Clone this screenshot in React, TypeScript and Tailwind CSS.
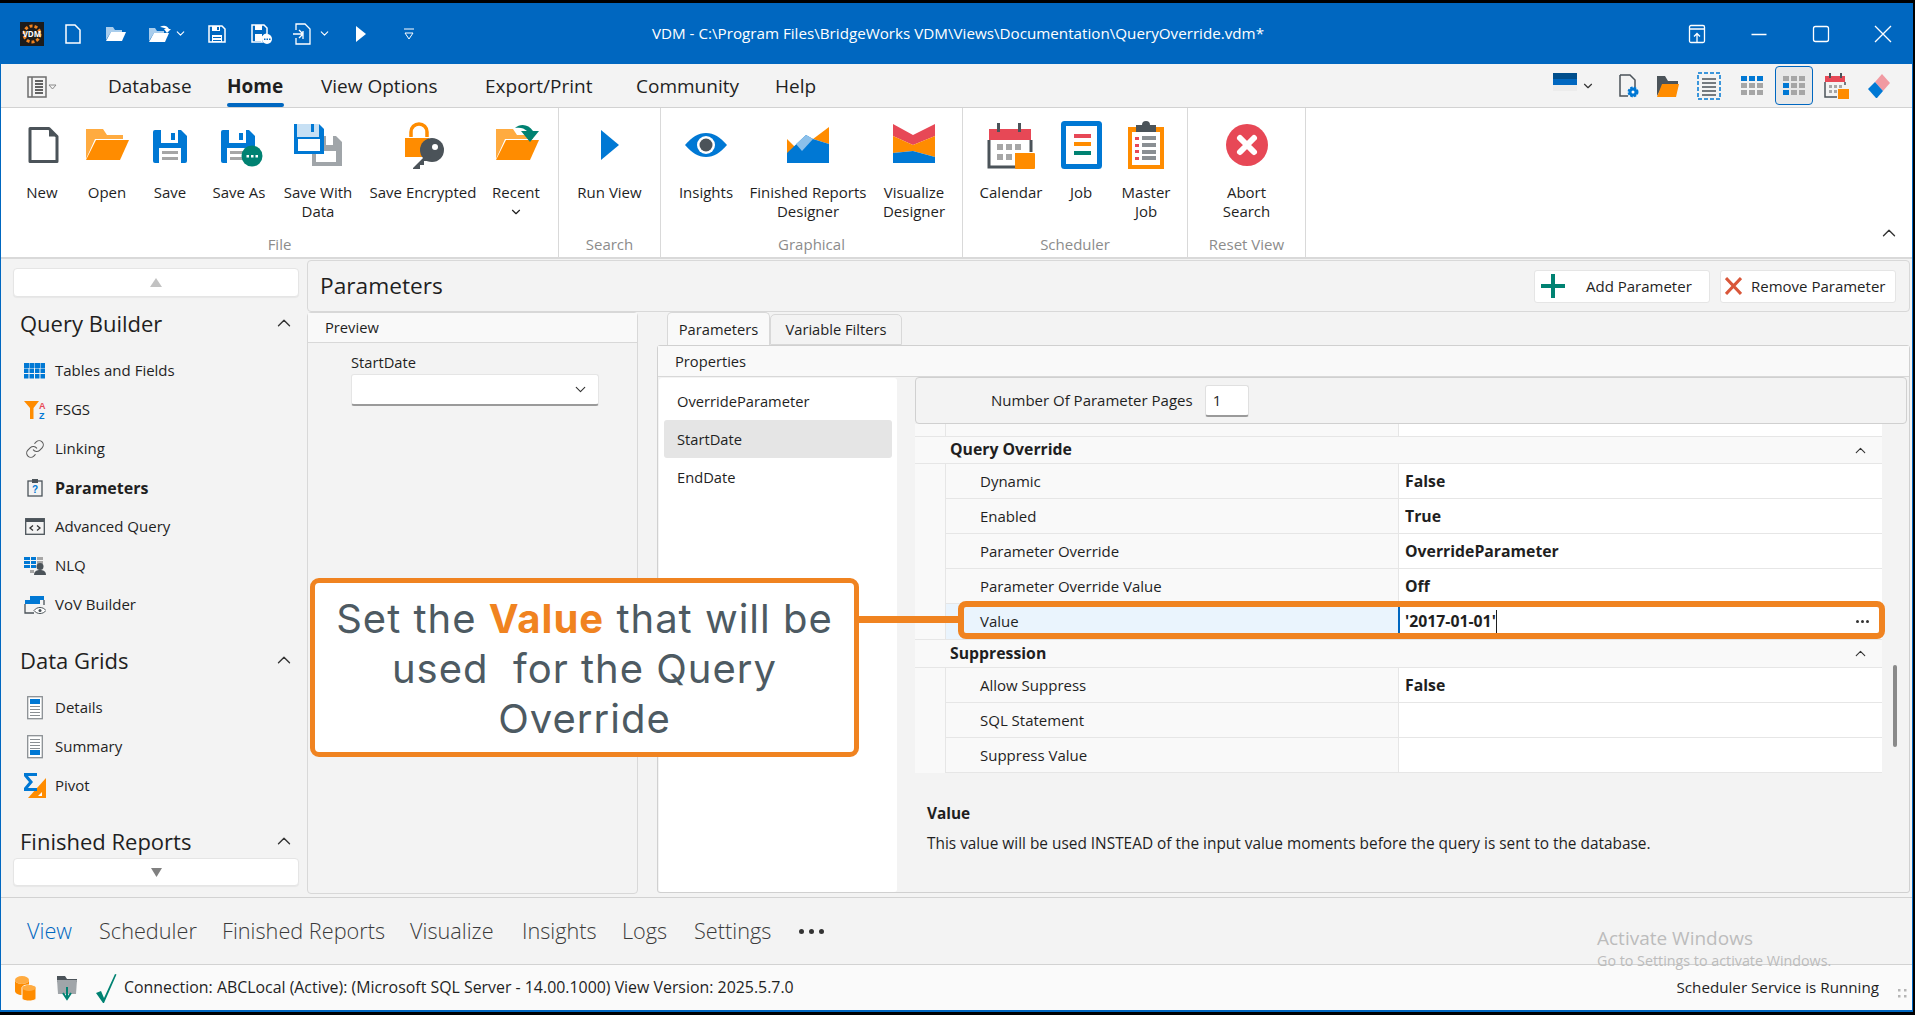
import { ChevronDown, ChevronUp, Link as LinkIcon } from "lucide-react";
import type { ReactNode } from "react";

const BLUE = "#0078d4";
const ORANGE = "#ff8c00";
const GREY = "#4b5359";
const TEAL = "#008272";
const RED = "#e74856";

// ── ribbon icons (48 box) ───────────────────────────────────────
function Box({ children, s = 48 }: { children: ReactNode; s?: number }) {
  return (
    <svg width={s} height={s} viewBox={`0 0 ${s} ${s}`} className="shrink-0">
      {children}
    </svg>
  );
}

const NewIcon = () => (
  <Box>
    <path d="M12 7.500h19l8 8v25H12z" fill="#fff" stroke={GREY} strokeWidth="3" strokeLinejoin="round" />
    <path d="M31 7v8.500h8z" fill={GREY} />
  </Box>
);

const Folder = ({ dx = 0 }: { dx?: number }) => (
  <g transform={`translate(${dx} 0)`}>
    <path d="M3 8h17l4 6h16v4H12L3 38z" fill="#ffab40" />
    <path d="M3 39l10-20h33l-9 20z" fill={ORANGE} />
  </g>
);

const Floppy = ({ x = 7, y = 9 }: { x?: number; y?: number }) => (
  <g transform={`translate(${x} ${y})`}>
    <path d="M0 2a2 2 0 0 1 2-2h26l6 6v25a2 2 0 0 1-2 2H2a2 2 0 0 1-2-2z" fill={BLUE} />
    <path d="M8 0h17v13H8z" fill="#fff" />
    <path d="M18 3h4v7h-4z" fill={BLUE} />
    <path d="M6 18h22v15H6z" fill="#fff" />
    <path d="M9 21h16v3H9zM9 27h16v3H9z" fill="#a6a6a6" />
  </g>
);

const SaveAsIcon = () => (
  <Box>
    <Floppy x={6} y={9} />
    <circle cx="37" cy="35" r="10.500" fill={TEAL} />
    <path d="M31.500 34h2.500v2.500h-2.500zM36 34h2.500v2.500H36zM40.500 34h2.500v2.500h-2.500z" fill="#fff" />
  </Box>
);

const SaveDataIcon = () => (
  <Box>
    <path d="M18 15h24l6 6v24H18z" fill="#a0a5a9" />
    <path d="M22 30h20v11H22z" fill="#fff" />
    <path d="M32 15h7v9h-7z" fill="#fff" />
    <path d="M0 3h25l5 5v25H0z" fill={BLUE} />
    <path d="M3 3h22v13H3z" fill="#c7e0f4" />
    <path d="M17 3h3v8h-3z" fill={BLUE} />
    <path d="M4 18h22v12H4z" fill="#fff" />
  </Box>
);

const EncryptedIcon = () => (
  <Box>
    <path d="M12 16v-5a8 8 0 0 1 16 0v5" fill="none" stroke={ORANGE} strokeWidth="3.500" />
    <path d="M6 17h24v19H6z" fill={ORANGE} />
    <circle cx="33" cy="29" r="12" fill={GREY} />
    <circle cx="36" cy="26" r="3" fill="#fff" />
    <path d="M27 34l-13 13v1h7v-4h4v-4h3l4-4z" fill={GREY} />
  </Box>
);

const RecentIcon = () => (
  <Box>
    <Folder dx={1} />
    <path d="M23 7c5-5 14-4 18 3h6l-9 11-9-11h6c-3-3-7-4-12-3z" fill={TEAL} />
  </Box>
);

const InsightsIcon = () => (
  <Box>
    <path d="M3 24C10 16 16 12 24 12s14 4 21 12c-7 8-13 12-21 12S10 32 3 24z" fill={BLUE} />
    <circle cx="24" cy="24" r="9" fill="#fff" />
    <circle cx="24" cy="24" r="6.500" fill={GREY} />
  </Box>
);

const FinishedIcon = () => (
  <Box>
    <path d="M3 18l8 8-8 8zM45 6v17L29 18z" fill={ORANGE} />
    <path d="M3 32l19-18 7 4 16 5v19H3z" fill={BLUE} />
    <path d="M18 30l-6-7 10-9 7 4z" fill="#8cc0ea" />
  </Box>
);

const VisualizeIcon = () => (
  <Box>
    <path d="M3 3l20 11L45 3v12L23 24 3 15z" fill={RED} />
    <path d="M3 15l20 9 22-9v21l-22-6-20 2z" fill={ORANGE} />
    <path d="M3 32l20-2 22 6v6H3z" fill={BLUE} />
  </Box>
);

const CalendarIcon = () => (
  <Box>
    <path d="M2 8h42v11H2z" fill={RED} />
    <path d="M10 2h3v9h-3zM31 2h3v9h-3z" fill={GREY} />
    <path d="M2 19v27h30" fill="#fff" stroke={GREY} strokeWidth="3" />
    <path d="M44 19v12" stroke={GREY} strokeWidth="3" />
    <path d="M10 23h6v6h-6zM19 23h6v6h-6zM28 23h6v6h-6zM10 33h6v6h-6zM19 33h6v6h-6z" fill="#a6a6a6" />
    <path d="M28 32h19a1 1 0 0 1 1 1v14a1 1 0 0 1-1 1H29a1 1 0 0 1-1-1z" fill={ORANGE} />
  </Box>
);

const JobIcon = () => (
  <Box>
    <rect x="6.500" y="2.500" width="36" height="43" rx="1" fill="#fff" stroke={BLUE} strokeWidth="5" />
    <path d="M17 13h17v4H17z" fill={RED} />
    <path d="M17 21h17v4H17z" fill={ORANGE} />
    <path d="M17 30h17v4H17z" fill={TEAL} />
  </Box>
);

const MasterJobIcon = () => (
  <Box>
    <path d="M6 6h36v42H6z" fill={ORANGE} />
    <path d="M10 11h28v33H10z" fill="#fff" />
    <path d="M14 6h6a4 4 0 0 1 8 0h6v7H14z" fill={GREY} transform="translate(0 -2)" />
    <path d="M13 16h4v3h-4zM13 23h4v3h-4zM13 29h4v3h-4zM13 36h4v3h-4z" fill={RED} />
    <path d="M20 15h14v4H20zM20 22h14v4H20zM20 29h14v4H20zM20 35h14v4H20z" fill="#8a8f93" />
  </Box>
);

const AbortIcon = () => (
  <Box>
    <ellipse cx="24" cy="24" rx="21" ry="21" fill={RED} />
    <path d="M17 17l14 14M31 17L17 31" stroke="#fff" strokeWidth="6" strokeLinecap="round" />
  </Box>
);

// ── ribbon ──────────────────────────────────────────────────────
function Tool({ icon, label, className, chevron }: { icon: ReactNode; label: ReactNode; className: string; chevron?: boolean }) {
  return (
    <div className={`flex flex-col items-center text-center ${className}`}>
      {icon}
      <div className="mt-[14px] whitespace-nowrap leading-[19px]">{label}</div>
      {chevron && <ChevronDown size={14} strokeWidth={2} className="mt-[3px]" />}
    </div>
  );
}

function Group({ label, className, children }: { label: string; className: string; children: ReactNode }) {
  return (
    <div className={`flex h-full flex-col border-r border-[#d9d9d9] ${className}`}>
      <div className="flex flex-1 pt-[13px]">{children}</div>
      <div className="pb-[3px] text-center leading-[19px] text-[#8c8c8c]">{label}</div>
    </div>
  );
}

function Ribbon() {
  return (
    <div className="relative flex h-[151px] shrink-0 border-b-2 border-[#d9d9d9] bg-white text-[15px] text-[#1f1f1f]">
      <Group label="File" className="w-[558px]">
        <div className="w-[9px]" />
        <Tool icon={<NewIcon />} label="New" className="w-[64px]" />
        <Tool icon={<Box><Folder /></Box>} label="Open" className="w-[66px]" />
        <Tool icon={<Box><Floppy /></Box>} label="Save" className="w-[60px]" />
        <Tool icon={<SaveAsIcon />} label="Save As" className="w-[78px]" />
        <Tool icon={<SaveDataIcon />} label={<>Save With<br />Data</>} className="w-[80px]" />
        <Tool icon={<EncryptedIcon />} label="Save Encrypted" className="w-[130px]" />
        <Tool icon={<RecentIcon />} label="Recent" className="w-[56px]" chevron />
      </Group>
      <Group label="Search" className="w-[102px]">
        <Tool
          icon={<Box><path d="M15 9l18 15-18 15z" fill={BLUE} /></Box>}
          label="Run View"
          className="w-[101px]"
        />
      </Group>
      <Group label="Graphical" className="w-[302px]">
        <div className="w-[11px]" />
        <Tool icon={<InsightsIcon />} label="Insights" className="w-[68px]" />
        <Tool icon={<FinishedIcon />} label={<>Finished Reports<br />Designer</>} className="w-[136px]" />
        <Tool icon={<VisualizeIcon />} label={<>Visualize<br />Designer</>} className="w-[76px]" />
      </Group>
      <Group label="Scheduler" className="w-[225px]">
        <div className="w-[10px]" />
        <Tool icon={<CalendarIcon />} label="Calendar" className="w-[76px]" />
        <Tool icon={<JobIcon />} label="Job" className="w-[64px]" />
        <Tool icon={<MasterJobIcon />} label={<>Master<br />Job</>} className="w-[66px]" />
      </Group>
      <Group label="Reset View" className="w-[118px]">
        <Tool icon={<AbortIcon />} label={<>Abort<br />Search</>} className="w-[117px]" />
      </Group>
      <div className="flex flex-1 items-end justify-end pb-[13px] pr-[12px]">
        <ChevronUp size={22} strokeWidth={1.5} className="text-[#333]" />
      </div>
    </div>
  );
}

// ── title bar ───────────────────────────────────────────────────
const qa = { fill: "#fff" };

function TitleBar() {
  return (
    <div className="flex h-[61px] shrink-0 items-center bg-[#0067c0] text-white">
      <div className="flex w-[600px] items-center pl-[19px]">
        <div className="relative flex h-[24px] w-[24px] items-center justify-center bg-[#1c1c1c]">
          <svg width="24" height="24" viewBox="0 0 24 24" className="absolute inset-0">
            <circle cx="12" cy="12" r="8" fill="none" stroke="#f08320" strokeWidth="3" strokeDasharray="3 2" />
          </svg>
          <span className="relative text-[8px] font-bold leading-none text-white">VDM</span>
        </div>
        <svg width="18" height="20" viewBox="0 0 18 20" className="ml-[20px]">
          <path d="M2 1h9l5 5v13H2z" fill="none" stroke="#fff" strokeWidth="1.500" />
        </svg>
        <svg width="22" height="18" viewBox="0 0 22 18" className="ml-[23px]">
          <path d="M1 2h7l2 3h7v2H6L1 15z" fill="#a9cdec" />
          <path d="M1 16l5-9h15l-4 9z" {...qa} />
        </svg>
        <svg width="24" height="20" viewBox="0 0 24 20" className="ml-[21px]">
          <path d="M1 4h6l2 3h7v2H6L1 17z" fill="#a9cdec" />
          <path d="M1 18l5-9h15l-4 9z" {...qa} />
          <path d="M12 3c3-2 7-2 9 2h2l-4 4-3-4h2c-1-1-4-2-6-2z" {...qa} />
        </svg>
        <ChevronDown size={13} strokeWidth={2} className="ml-[2px]" />
        <svg width="18" height="18" viewBox="0 0 18 18" className="ml-[21px]">
          <path d="M1 1h13l3 3v13H1z" fill="none" stroke="#fff" strokeWidth="1.500" />
          <path d="M4 1h8v5H4zM4 10h10v7H4z" {...qa} />
          <path d="M9 2h2v3H9zM5 12h8v1H5zM5 15h8v1H5z" fill="#0067c0" />
        </svg>
        <svg width="22" height="20" viewBox="0 0 22 20" className="ml-[25px]">
          <path d="M1 1h12l3 3v6a6 6 0 0 0-5 8H1z" fill="none" stroke="#fff" strokeWidth="1.500" />
          <path d="M4 1h7v5H4zM4 10h7v7H4z" {...qa} />
          <circle cx="16" cy="15" r="5" {...qa} />
          <path d="M13 14.500h1.500v1.500H13zM15.500 14.500H17v1.500h-1.500zM18 14.500h1.500v1.500H18z" fill="#0067c0" />
        </svg>
        <svg width="18" height="22" viewBox="0 0 18 22" className="ml-[20px]">
          <path d="M3 7V1h9l5 5v15H3v-6" fill="none" stroke="#fff" strokeWidth="1.300" />
          <path d="M0 11h9M6 7l4 4-4 4M10 8v8" fill="none" stroke="#fff" strokeWidth="1.300" />
        </svg>
        <ChevronDown size={13} strokeWidth={2} className="ml-[7px]" />
        <svg width="10" height="16" viewBox="0 0 10 16" className="ml-[25px]">
          <path d="M0 0l10 8-10 8z" {...qa} />
        </svg>
        <svg width="12" height="12" viewBox="0 0 12 12" className="ml-[37px]">
          <path d="M1 1h10M2 5h8l-4 6z" fill="none" stroke="#fff" strokeWidth="1" />
        </svg>
      </div>
      <div className="w-[714px] whitespace-nowrap text-center text-[15.200px]">
        VDM - C:\Program Files\BridgeWorks VDM\Views\Documentation\QueryOverride.vdm*
      </div>
      <div className="flex flex-1 items-center justify-end gap-[38px] pr-[17px]">
        <svg width="24" height="24" viewBox="0 0 24 24" fill="none" stroke="#fff" strokeWidth="1.300">
          <rect x="4.500" y="3.500" width="15" height="17" rx="1.500" />
          <path d="M4.500 7h15M12 20v-8M9 14.500l3-3 3 3" />
        </svg>
        <svg width="24" height="24" viewBox="0 0 24 24" fill="none" stroke="#fff" strokeWidth="1.500">
          <path d="M4.500 12.500h15" />
        </svg>
        <svg width="24" height="24" viewBox="0 0 24 24" fill="none" stroke="#fff" strokeWidth="1.300">
          <rect x="4.500" y="4.500" width="15" height="15" rx="2" />
        </svg>
        <svg width="24" height="24" viewBox="0 0 24 24" fill="none" stroke="#fff" strokeWidth="1.300">
          <path d="M4 4l16 16M20 4L4 20" />
        </svg>
      </div>
    </div>
  );
}

// ── menu bar ────────────────────────────────────────────────────
function MenuBar() {
  return (
    <div className="flex h-[44px] shrink-0 border-b border-[#d2d2d2] bg-[#f3f3f3] text-[19px] leading-[26px] text-[#1f1f1f]">
      <div className="flex w-[107px] items-start pl-[26px] pt-[12px]">
        <svg width="30" height="22" viewBox="0 0 30 22" fill="none">
          <rect x="1" y="1" width="18" height="20" stroke="#6d6d6d" strokeWidth="1.500" />
          <path d="M5 1v20" stroke="#6d6d6d" strokeWidth="1.500" />
          <path d="M8 5h8M8 8h8M8 11h8M8 14h8M8 17h8" stroke="#333" strokeWidth="1.300" />
          <path d="M22 9h7l-3.500 4z" stroke="#8a8a8a" />
        </svg>
      </div>
      <div className="w-[119px] pt-[9px]">Database</div>
      <div className="w-[94px] pt-[9px] font-bold">
        Home
        <div className="mt-[4px] h-[4px] w-[57px] rounded-full bg-[#0067c0]" />
      </div>
      <div className="w-[164px] pt-[9px]">View Options</div>
      <div className="w-[151px] pt-[9px]">Export/Print</div>
      <div className="w-[139px] pt-[9px]">Community</div>
      <div className="pt-[9px]">Help</div>
      <div className="ml-auto flex items-start pr-[21px] pt-[2px]">
        <div className="mt-[7px] flex items-start">
          <svg width="25" height="18" viewBox="0 0 25 18">
            <path d="M0 0h24v6H0z" fill="#004e8c" />
            <path d="M0 6h24v6H0z" fill="#0067c0" />
            <path d="M0 12h24v6H0z" fill="#ececec" />
          </svg>
          <ChevronDown size={14} strokeWidth={2} className="ml-[3px] mt-[6px] text-[#333]" />
        </div>
        <svg width="24" height="26" viewBox="0 0 24 26" className="ml-[21px] mt-[7px]">
          <path d="M4 2h10l5 5v7M4 2v21h8" fill="none" stroke={GREY} strokeWidth="1.500" />
          <circle cx="17" cy="19" r="4.500" fill={BLUE} />
          <circle cx="17" cy="19" r="4" fill="none" stroke={BLUE} strokeWidth="3" strokeDasharray="2 1.200" />
          <circle cx="17" cy="19" r="1.500" fill="#fff" />
        </svg>
        <svg width="24" height="24" viewBox="0 0 24 24" className="ml-[16px] mt-[8px]">
          <path d="M1 2h8l3 5h10v4H7L1 22z" fill={GREY} />
          <path d="M1 23l5-13h17l-3 13z" fill={ORANGE} />
        </svg>
        <svg width="24" height="28" viewBox="0 0 24 28" fill="none" className="ml-[17px] mt-[6px]">
          <rect x="1" y="1" width="22" height="26" stroke={BLUE} strokeWidth="1.500" strokeDasharray="4 2" />
          <path d="M5 7h14M5 11h14M5 15h14M5 19h14M5 23h14" stroke={GREY} strokeWidth="1.500" />
        </svg>
        <svg width="24" height="22" viewBox="0 0 24 22" className="ml-[19px] mt-[9px]">
          <path d="M1 1h6v5H1zM9 1h6v5H9zM17 1h6v5h-6z" fill={BLUE} />
          <path d="M1 8h6v5H1zM9 8h6v5H9zM17 8h6v5h-6zM1 15h6v5H1zM9 15h6v5H9zM17 15h6v5h-6z" fill="#a6a6a6" />
        </svg>
        <div className="ml-[11px] flex h-[39px] w-[38px] items-center justify-center rounded-[4px] border border-[#0067c0] bg-[#e8e8e8]">
          <svg width="24" height="22" viewBox="0 0 24 22">
            <path d="M1 1h6v5H1zM9 1h6v5H9zM17 1h6v5h-6zM9 8h6v5H9zM17 8h6v5h-6zM9 15h6v5H9zM17 15h6v5h-6z" fill="#a6a6a6" />
            <path d="M1 8h6v5H1zM1 15h6v5H1z" fill={BLUE} />
          </svg>
        </div>
        <svg width="26" height="28" viewBox="0 0 26 28" className="ml-[11px] mt-[6px]">
          <path d="M1 4h20v6H1z" fill={RED} />
          <path d="M5 1h2v5H5zM16 1h2v5h-2z" fill={GREY} />
          <path d="M1 10v15h12M21 10v3" fill="none" stroke={GREY} strokeWidth="1.500" />
          <path d="M5 13h3v3H5zM10 13h3v3h-3zM15 13h3v3h-3zM5 18h3v3H5zM10 18h3v3h-3z" fill="#a6a6a6" />
          <path d="M14 17h11v10H14z" fill={ORANGE} />
        </svg>
        <svg width="24" height="26" viewBox="0 0 24 26" className="ml-[17px] mt-[7px]">
          <path d="M15 1l8 9-7 8-8-9z" fill="#f19aa2" />
          <path d="M8 9l8 9-6 7-1 0-8-9z" fill={BLUE} />
        </svg>
      </div>
    </div>
  );
}

// ── sidebar ─────────────────────────────────────────────────────
const IconTables = () => (
  <svg width="21" height="16" viewBox="0 0 21 16" fill={BLUE}>
    <path d="M0 0h21v5H0z" />
    <path d="M0 5.500h4.500v4.500H0zM5.500 5.500H10v4.500H5.500zM11 5.500h4.500v4.500H11zM16.500 5.500H21v4.500h-4.500zM0 11h4.500v4.500H0zM5.500 11H10v4.500H5.500zM11 11h4.500v4.500H11zM16.500 11H21v4.500h-4.500z" />
    <path d="M5 0h.5v5H5zM10.500 0h.5v5h-.5zM16 0h.5v5H16z" fill="#f3f3f3" />
  </svg>
);
const IconFsgs = () => (
  <svg width="22" height="20" viewBox="0 0 22 20">
    <path d="M0 1h15l-5.500 7v11H6V8z" fill={ORANGE} />
    <text x="15" y="8.500" fontSize="9" fontWeight="700" fill={RED} fontFamily="'Liberation Sans',sans-serif">A</text>
    <text x="15" y="18.500" fontSize="9" fontWeight="700" fill={BLUE} fontFamily="'Liberation Sans',sans-serif">Z</text>
  </svg>
);
const IconParams = () => (
  <svg width="16" height="19" viewBox="0 0 16 19" fill="none">
    <rect x="1" y="3" width="14" height="15" stroke={GREY} strokeWidth="1.300" />
    <path d="M5 1h6v4H5z" fill={GREY} />
    <text x="8" y="15" textAnchor="middle" fontSize="10" fontWeight="700" fill={BLUE} fontFamily="'Liberation Sans',sans-serif">?</text>
  </svg>
);
const IconAdvanced = () => (
  <svg width="20" height="17" viewBox="0 0 20 17" fill="none">
    <rect x=".7" y=".7" width="18.600" height="15.600" stroke={GREY} strokeWidth="1.300" />
    <path d="M1 1h18v3H1z" fill={GREY} />
    <path d="M8 7.500L5 10l3 2.500M12 7.500l3 2.500-3 2.500" stroke="#333" strokeWidth="1.300" />
  </svg>
);
const IconNlq = () => (
  <svg width="22" height="19" viewBox="0 0 22 19">
    <path d="M0 1h6v3H0zM7 1h5v3H7zM0 5h6v3H0zM7 5h5v3H7zM0 9h6v3H0zM7 9h5v3H7z" fill={BLUE} />
    <path d="M13 1h6v3h-6zM13 5h6v3h-6zM6 14h4v3H6z" fill="#a6a6a6" />
    <circle cx="16" cy="10.500" r="3.500" fill={GREY} />
    <path d="M10 19c0-4 3-5 6-5s6 1 6 5z" fill={GREY} />
  </svg>
);
const IconVov = () => (
  <svg width="22" height="20" viewBox="0 0 22 20" fill="none">
    <path d="M6 1h14v4H6z" fill={BLUE} />
    <path d="M1 5h15v4H1z" fill={BLUE} />
    <path d="M1 9v9h9M20 5v5" stroke={GREY} strokeWidth="1.300" />
    <path d="M10 15.500c3-4 9-4 12 0-3 4-9 4-12 0z" fill="#fff" stroke={GREY} />
    <circle cx="16" cy="15.500" r="1.500" fill={GREY} />
  </svg>
);
const IconDetails = () => (
  <svg width="16" height="24" viewBox="0 0 16 24" fill="none">
    <rect x=".7" y=".7" width="14.600" height="22" fill="#fff" stroke="#8a8f93" strokeWidth="1.300" />
    <path d="M3 3h10v5H3z" fill={BLUE} />
    <path d="M3 10.500h10M3 13.500h10M3 16.500h10M3 19.500h10" stroke="#8a8f93" />
  </svg>
);
const IconSummary = () => (
  <svg width="16" height="24" viewBox="0 0 16 24" fill="none">
    <rect x=".7" y=".7" width="14.600" height="22" fill="#fff" stroke="#8a8f93" strokeWidth="1.300" />
    <path d="M3 4.500h10M3 7.500h10M3 10.500h10M3 13.500h10" stroke="#8a8f93" />
    <path d="M3 15h10v5H3z" fill={BLUE} />
  </svg>
);
const IconPivot = () => (
  <svg width="22" height="25" viewBox="0 0 22 25">
    <path d="M22 5v20H4z" fill={ORANGE} />
    <path d="M18 19v4h-4z" fill="#fff" />
    <path d="M0 0h13v3H4l5 6-5 6h9v3H0v-3l5-6-5-6z" fill={BLUE} />
  </svg>
);

function SideHead({ label }: { label: string }) {
  return (
    <div className="flex h-[32px] items-center justify-between pl-[19px] pr-[11px] text-[22px] text-[#1f1f1f]">
      <span>{label}</span>
      <ChevronUp size={22} strokeWidth={1.5} className="text-[#333]" />
    </div>
  );
}

function SideRow({ icon, label, bold }: { icon: ReactNode; label: string; bold?: boolean }) {
  return (
    <div className="flex h-[39px] items-center text-[#1f1f1f]">
      <div className="ml-[22px] flex w-[23px] justify-center">{icon}</div>
      <span className={`ml-[9px] ${bold ? "text-[16px] font-bold" : "text-[15px]"}`}>{label}</span>
    </div>
  );
}

function Sidebar() {
  return (
    <div className="flex w-[305px] shrink-0 flex-col pb-[11px] pt-[9px]">
      <div className="ml-[12px] mr-[7px] flex h-[29px] shrink-0 items-center justify-center rounded-[4px] border border-[#e5e5e5] bg-white shadow-[0_1px_1px_rgba(0,0,0,.05)]">
        <svg width="12" height="9" viewBox="0 0 12 9"><path d="M6 0l6 9H0z" fill="#c2c2c2" /></svg>
      </div>
      <div className="flex-1 overflow-hidden pt-[10px]">
        <SideHead label="Query Builder" />
        <div className="mt-[12px]">
          <SideRow icon={<IconTables />} label="Tables and Fields" />
          <SideRow icon={<IconFsgs />} label="FSGS" />
          <SideRow icon={<LinkIcon size={20} strokeWidth={1.3} className="text-[#5a5a5a]" />} label="Linking" />
          <SideRow icon={<IconParams />} label="Parameters" bold />
          <SideRow icon={<IconAdvanced />} label="Advanced Query" />
          <SideRow icon={<IconNlq />} label="NLQ" />
          <SideRow icon={<IconVov />} label="VoV Builder" />
        </div>
        <div className="mt-[20px]">
          <SideHead label="Data Grids" />
          <div className="mt-[12px]">
            <SideRow icon={<IconDetails />} label="Details" />
            <SideRow icon={<IconSummary />} label="Summary" />
            <SideRow icon={<IconPivot />} label="Pivot" />
          </div>
        </div>
        <div className="mt-[20px]">
          <SideHead label="Finished Reports" />
        </div>
      </div>
      <div className="ml-[12px] mr-[7px] flex h-[28px] shrink-0 items-center justify-center rounded-[4px] border border-[#e5e5e5] bg-white shadow-[0_1px_1px_rgba(0,0,0,.05)]">
        <svg width="11" height="9" viewBox="0 0 11 9"><path d="M0 0h11L5.500 9z" fill="#808080" /></svg>
      </div>
    </div>
  );
}

// ── property grid ───────────────────────────────────────────────
const ROW_LABEL = "flex w-[453px] items-center border-b border-l border-[#e6e6e6] bg-[#f9f9f9] pl-[34px] text-[15px]";
const ROW_VALUE = "flex w-[484px] items-center border-b border-l border-[#e6e6e6] bg-white pl-[6px] pt-[2px] text-[15.800px] font-bold";

function GridRow({ label, value }: { label: string; value?: string }) {
  return (
    <div className="flex h-[35px]">
      <div className="w-[30px] bg-[#f9f9f9]" />
      <div className={ROW_LABEL}>{label}</div>
      <div className={ROW_VALUE}>{value}</div>
    </div>
  );
}

function GridGroup({ label, className }: { label: string; className: string }) {
  return (
    <div className={`flex items-center justify-between border-y border-[#e6e6e6] bg-[#f9f9f9] pl-[35px] pr-[13px] text-[15.800px] font-bold ${className}`}>
      <span>{label}</span>
      <ChevronUp size={17} strokeWidth={1.6} className="text-[#333]" />
    </div>
  );
}

function Properties() {
  return (
    <div className="flex flex-1 flex-col text-[14.700px]">
      <div className="flex h-[33px] pl-[10px]">
        <div className="flex w-[103px] items-center justify-center rounded-t-[5px] border border-b-0 border-[#d8d8d8] bg-[#f9f9f9]">Parameters</div>
        <div className="mt-[2px] flex w-[132px] items-center justify-center rounded-t-[5px] border border-[#d8d8d8] bg-[#f3f3f3]">Variable Filters</div>
      </div>
      <div className="flex h-[548px] flex-col rounded-[3px] border border-[#d0d0d0]">
        <div className="flex h-[31px] shrink-0 items-center border-b border-[#d8d8d8] bg-[#f9f9f9] pl-[17px]">Properties</div>
        <div className="flex flex-1">
          <div className="ml-[1px] mt-[1px] w-[238px] rounded-[3px] bg-white px-[5px] pt-[4px]">
            <div className="flex h-[38px] items-center pl-[13px]">OverrideParameter</div>
            <div className="flex h-[38px] items-center rounded-[3px] bg-[#e5e5e5] pl-[13px]">StartDate</div>
            <div className="flex h-[38px] items-center pl-[13px]">EndDate</div>
          </div>
          <div className="ml-[18px] flex-1">
            <div className="mr-[2px] flex h-[47px] items-center rounded-[4px] border border-[#d0d0d0] bg-[#f3f3f3] pl-[75px] text-[15px]">
              <span>Number Of Parameter Pages</span>
              <div className="ml-[12px] flex h-[32px] w-[44px] items-center rounded-[3px] border border-b-2 border-[#e0e0e0] border-b-[#9a9a9a] bg-white pl-[7px]">1</div>
            </div>
            <div className="flex">
              <div className="w-[967px]">
                <div className="flex h-[12px]">
                  <div className="w-[30px] bg-[#f9f9f9]" />
                  <div className="w-[453px] border-l border-[#e6e6e6] bg-[#f9f9f9]" />
                  <div className="w-[484px] border-l border-[#e6e6e6] bg-white" />
                </div>
                <GridGroup label="Query Override" className="h-[28px]" />
                <GridRow label="Dynamic" value="False" />
                <GridRow label="Enabled" value="True" />
                <GridRow label="Parameter Override" value="OverrideParameter" />
                <GridRow label="Parameter Override Value" value="Off" />
                <div className="flex h-[35px]">
                  <div className="w-[30px] bg-[#f9f9f9]" />
                  <div className="flex w-[453px] items-center border-l border-[#e6e6e6] bg-[#eaf4fd] pl-[34px] text-[15px]">Value</div>
                  <div className="flex w-[484px] items-center justify-between border-l-2 border-[#0067c0] bg-white pl-[5px] pr-[13px] text-[15.800px] font-bold">
                    <span className="border-r border-[#1f1f1f]">'2017-01-01'</span>
                    <span className="flex gap-[2px]">
                      <i className="h-[3px] w-[3px] rounded-full bg-[#333]" />
                      <i className="h-[3px] w-[3px] rounded-full bg-[#333]" />
                      <i className="h-[3px] w-[3px] rounded-full bg-[#333]" />
                    </span>
                  </div>
                </div>
                <GridGroup label="Suppression" className="h-[29px]" />
                <GridRow label="Allow Suppress" value="False" />
                <GridRow label="SQL Statement" />
                <GridRow label="Suppress Value" />
              </div>
              <div className="ml-[11px] mt-[241px] h-[82px] w-[4px] rounded-full bg-[#8a8a8a]" />
            </div>
            <div className="pl-[12px] text-[15.400px]">
              <div className="mt-[31px] font-bold leading-[20px]">Value</div>
              <div className="mt-[10px] whitespace-nowrap leading-[20px]">This value will be used INSTEAD of the input value moments before the query is sent to the database.</div>
            </div>
          </div>
        </div>
      </div>
    </div>
  );
}

function Content() {
  return (
    <div className="flex flex-1 flex-col pb-[3px] pl-[1px] pr-[2px] pt-[1px] text-[#1f1f1f]">
      <div className="flex h-[52px] shrink-0 items-center justify-between rounded-[4px] border border-[#d8d8d8] pl-[12px] pr-[13px]">
        <span className="text-[22.700px]">Parameters</span>
        <div className="flex gap-[10px] text-[15px]">
          <div className="flex h-[33px] w-[176px] items-center rounded-[3px] border border-[#e5e5e5] bg-white pl-[6px]">
            <svg width="24" height="24" viewBox="0 0 24 24"><path d="M10 0h4v10h10v4H14v10h-4V14H0v-4h10z" fill={TEAL} /></svg>
            <span className="ml-[21px]">Add Parameter</span>
          </div>
          <div className="flex h-[33px] w-[176px] items-center rounded-[3px] border border-[#e5e5e5] bg-white pl-[4px]">
            <svg width="17" height="18" viewBox="0 0 17 18" fill="none"><path d="M1 1l15 16M16 1L1 17" stroke="#d9573a" strokeWidth="3" /></svg>
            <span className="ml-[9px]">Remove Parameter</span>
          </div>
        </div>
      </div>
      <div className="flex flex-1">
        <div className="flex w-[331px] flex-col rounded-[4px] border border-[#d8d8d8] text-[14.700px]">
          <div className="flex h-[30px] shrink-0 items-center border-b border-[#d8d8d8] bg-[#f9f9f9] pl-[17px]">Preview</div>
          <div className="pl-[43px] pt-[9px]">
            <div className="leading-[20px]">StartDate</div>
            <div className="mt-[2px] flex h-[32px] w-[248px] items-center justify-end rounded-[3px] border border-b-2 border-[#e5e5e5] border-b-[#9a9a9a] bg-white pr-[9px]">
              <ChevronDown size={17} strokeWidth={1.6} className="text-[#333]" />
            </div>
          </div>
        </div>
        <div className="w-[19px]" />
        <Properties />
      </div>
    </div>
  );
}

// ── bottom ──────────────────────────────────────────────────────
function BottomNav() {
  const items: [string, string][] = [
    ["Scheduler", "w-[123px]"],
    ["Finished Reports", "w-[188px]"],
    ["Visualize", "w-[112px]"],
    ["Insights", "w-[100px]"],
    ["Logs", "w-[72px]"],
    ["Settings", "w-[105px]"],
  ];
  return (
    <div className="flex h-[67px] shrink-0 items-center border-t border-[#d2d2d2] pl-[26px] pt-[1px] text-[21.700px] font-light text-[#3a3a3a]">
      <div className="w-[72px] text-[#0067c0]">View</div>
      {items.map(([t, w]) => (
        <div key={t} className={w}>{t}</div>
      ))}
      <div className="flex gap-[5px]">
        <span className="h-[5px] w-[5px] rounded-full bg-[#333]" />
        <span className="h-[5px] w-[5px] rounded-full bg-[#333]" />
        <span className="h-[5px] w-[5px] rounded-full bg-[#333]" />
      </div>
    </div>
  );
}

function StatusBar() {
  return (
    <div className="flex h-[46px] shrink-0 items-center border-t border-[#d2d2d2] bg-[#fafafa] pl-[13px] text-[#1f1f1f]">
      <svg width="23" height="26" viewBox="0 0 23 26">
        <ellipse cx="8" cy="5" rx="7" ry="4" fill="#ffab40" />
        <path d="M1 5v11c0 2 3 4 7 4s7-2 7-4V5c0 2-3 4-7 4S1 7 1 5z" fill={ORANGE} />
        <path d="M8 13c0-2 3-3 7-3s7 1 7 3v10c0 2-3 3-7 3s-7-1-7-3z" fill={ORANGE} stroke="#fafafa" />
        <ellipse cx="15" cy="13" rx="6.500" ry="3" fill="#ffab40" />
      </svg>
      <svg width="22" height="26" viewBox="0 0 22 26" className="ml-[19px]">
        <path d="M1 1h8l2 3h10v3H1z" fill={GREY} />
        <path d="M1 5h20l-1 14H2z" fill="#a0a5a9" />
        <path d="M11 12v10M7 18l4 6 4-6" fill="none" stroke={TEAL} strokeWidth="2" />
      </svg>
      <svg width="21" height="30" viewBox="0 0 21 30" className="ml-[18px]">
        <path d="M0 20l5-2 3 7L19 1l1.500.500L8 30h-1z" fill={TEAL} />
      </svg>
      <span className="ml-[7px] text-[15.900px]">Connection: ABCLocal (Active): (Microsoft SQL Server - 14.00.1000) View Version: 2025.5.7.0</span>
      <span className="ml-auto mr-[19px] text-[15.200px]">Scheduler Service is Running</span>
      <svg width="9" height="10" viewBox="0 0 9 10" className="mr-[5px] mt-[12px]" fill="#b5b5b5">
        <path d="M0 0h2.500v2.500H0zM6 0h2.500v2.500H6zM0 6h2.500v2.500H0zM6 6h2.500v2.500H6z" />
      </svg>
    </div>
  );
}

export default function App() {
  return (
    <div className="relative h-[1015px] w-[1915px] overflow-hidden bg-black py-[3px] pr-[2px] font-['Open_Sans','Noto_Sans',sans-serif]">
      <div className="flex h-[1009px] w-[1913px] flex-col border-x border-b-2 border-[#0067c0] bg-[#f3f3f3]">
        <TitleBar />
        <MenuBar />
        <Ribbon />
        <div className="flex min-h-0 flex-1">
          <Sidebar />
          <Content />
        </div>
        <BottomNav />
        <StatusBar />
      </div>

      {/* callout over the grid */}
      <div className="absolute left-[958px] top-[601px] h-[38px] w-[927px] rounded-[8px] border-[6px] border-[#f08320]" />
      <div className="absolute left-[855px] top-[616px] h-[7px] w-[105px] bg-[#f08320]" />
      <div className="absolute left-[310px] top-[578px] h-[179px] w-[549px] rounded-[9px] border-[5px] border-[#f08320] bg-white pt-[11px] text-center font-['Inter','Open_Sans',sans-serif] text-[40px] leading-[50px] tracking-[1px] text-[#4d5a62]">
        Set the <b className="text-[#f08320]">Value</b> that will be
        <br />
        used&nbsp; for the Query
        <br />
        Override
      </div>

      <div className="pointer-events-none absolute left-[1597px] top-[924px] text-[#bcbcbc]">
        <div className="text-[19px] leading-[28px]">Activate Windows</div>
        <div className="text-[14.300px] leading-[18px]">Go to Settings to activate Windows.</div>
      </div>
    </div>
  );
}
